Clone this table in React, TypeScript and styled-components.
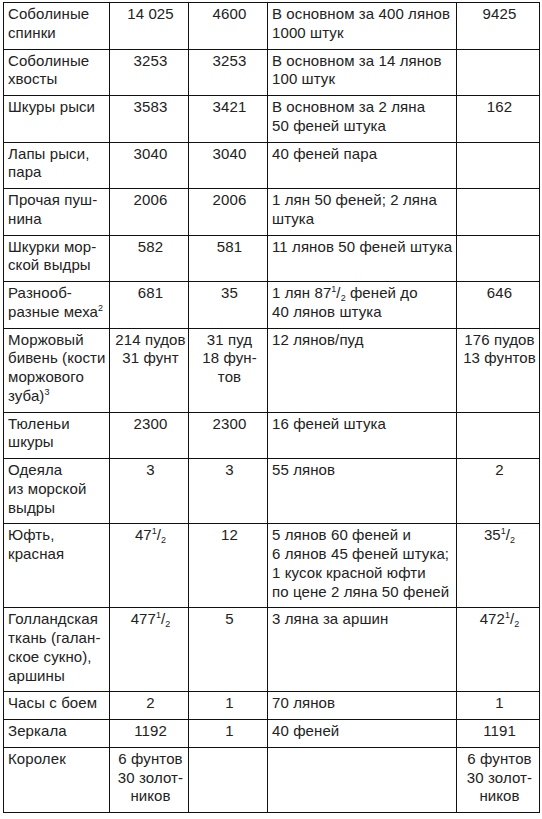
import React from "react";
import styled, { createGlobalStyle } from "styled-components";

const GlobalStyle = createGlobalStyle`
  html, body {
    margin: 0;
    padding: 0;
    background: #ffffff;
  }
  body {
    font-family: "Liberation Sans", Arial, sans-serif;
    color: #222;
  }
`;

const Page = styled.div`
  padding: 2px 0 0 3px;
`;

const Table = styled.table`
  width: 536px;
  table-layout: fixed;
  border-collapse: collapse;
  border: 1px solid #111;
`;

const Cell = styled.td<{ $align?: "left" | "center" }>`
  border: 1px solid #111;
  padding: 2px 1px 6px 4px;
  vertical-align: top;
  text-align: ${(p) => p.$align || "left"};
  font-size: 15px;
  line-height: 18.75px;
  letter-spacing: 0.1px;
  white-space: nowrap;
`;

const Sup = styled.sup`
  font-size: 9px;
  line-height: 0;
  vertical-align: 6px;
  letter-spacing: 0;
`;

const Sub = styled.sub`
  font-size: 9px;
  line-height: 0;
  vertical-align: -3px;
  letter-spacing: 0;
`;

const Half: React.FC<{ n: string }> = ({ n }) => (
  <>
    {n}
    <Sup>1</Sup>/<Sub>2</Sub>
  </>
);

type Row = {
  name: React.ReactNode[];
  a: React.ReactNode[];
  b: React.ReactNode[];
  price: React.ReactNode[];
  rest: React.ReactNode[];
};

const rows: Row[] = [
  {
    name: ["Соболиные", "спинки"],
    a: ["14 025"],
    b: ["4600"],
    price: ["В основном за 400 лянов", "1000 штук"],
    rest: ["9425"],
  },
  {
    name: ["Соболиные", "хвосты"],
    a: ["3253"],
    b: ["3253"],
    price: ["В основном за 14 лянов", "100 штук"],
    rest: [],
  },
  {
    name: ["Шкуры рыси"],
    a: ["3583"],
    b: ["3421"],
    price: ["В основном за 2 ляна", "50 феней штука"],
    rest: ["162"],
  },
  {
    name: ["Лапы рыси,", "пара"],
    a: ["3040"],
    b: ["3040"],
    price: ["40 феней пара", "\u00a0"],
    rest: [],
  },
  {
    name: ["Прочая пуш-", "нина"],
    a: ["2006"],
    b: ["2006"],
    price: ["1 лян 50 феней; 2 ляна", "штука"],
    rest: [],
  },
  {
    name: ["Шкурки мор-", "ской выдры"],
    a: ["582"],
    b: ["581"],
    price: ["11 лянов 50 феней штука"],
    rest: [],
  },
  {
    name: [
      "Разнооб-",
      <>
        разные меха<Sup>2</Sup>
      </>,
    ],
    a: ["681"],
    b: ["35"],
    price: [
      <>
        1 лян <Half n="87" /> феней до
      </>,
      "40 лянов штука",
    ],
    rest: ["646"],
  },
  {
    name: [
      "Моржовый",
      "бивень (кости",
      "моржового",
      <>
        зуба)<Sup>3</Sup>
      </>,
    ],
    a: ["214 пудов", "31 фунт"],
    b: ["31 пуд", "18 фун-", "тов"],
    price: ["12 лянов/пуд"],
    rest: ["176 пудов", "13 фунтов"],
  },
  {
    name: ["Тюленьи", "шкуры"],
    a: ["2300"],
    b: ["2300"],
    price: ["16 феней штука"],
    rest: [],
  },
  {
    name: ["Одеяла", "из морской", "выдры"],
    a: ["3"],
    b: ["3"],
    price: ["55 лянов"],
    rest: ["2"],
  },
  {
    name: ["Юфть,", "красная"],
    a: [<Half n="47" />],
    b: ["12"],
    price: [
      "5 лянов 60 феней и",
      "6 лянов 45 феней штука;",
      "1 кусок красной юфти",
      "по цене 2 ляна 50 феней",
    ],
    rest: [<Half n="35" />],
  },
  {
    name: ["Голландская", "ткань (галан-", "ское сукно),", "аршины"],
    a: [<Half n="477" />],
    b: ["5"],
    price: ["3 ляна за аршин"],
    rest: [<Half n="472" />],
  },
  {
    name: ["Часы с боем"],
    a: ["2"],
    b: ["1"],
    price: ["70 лянов"],
    rest: ["1"],
  },
  {
    name: ["Зеркала"],
    a: ["1192"],
    b: ["1"],
    price: ["40 феней"],
    rest: ["1191"],
  },
  {
    name: ["Королек"],
    a: ["6 фунтов", "30 золот-", "ников"],
    b: [],
    price: [],
    rest: ["6 фунтов", "30 золот-", "ников"],
  },
];

const Lines: React.FC<{ lines: React.ReactNode[] }> = ({ lines }) => (
  <>
    {lines.length === 0
      ? "\u00a0"
      : lines.map((l, i) => (
          <React.Fragment key={i}>
            {i > 0 && <br />}
            {l}
          </React.Fragment>
        ))}
  </>
);

export default function App() {
  return (
    <Page>
      <GlobalStyle />
      <Table>
        <colgroup>
          <col style={{ width: 106 }} />
          <col style={{ width: 79 }} />
          <col style={{ width: 79 }} />
          <col style={{ width: 189 }} />
          <col style={{ width: 83 }} />
        </colgroup>
        <tbody>
          {rows.map((r, i) => (
            <tr key={`row_${i}`}>
              <Cell>
                <Lines lines={r.name} />
              </Cell>
              <Cell $align="center">
                <Lines lines={r.a} />
              </Cell>
              <Cell $align="center">
                <Lines lines={r.b} />
              </Cell>
              <Cell>
                <Lines lines={r.price} />
              </Cell>
              <Cell $align="center">
                <Lines lines={r.rest} />
              </Cell>
            </tr>
          ))}
        </tbody>
      </Table>
    </Page>
  );
}
